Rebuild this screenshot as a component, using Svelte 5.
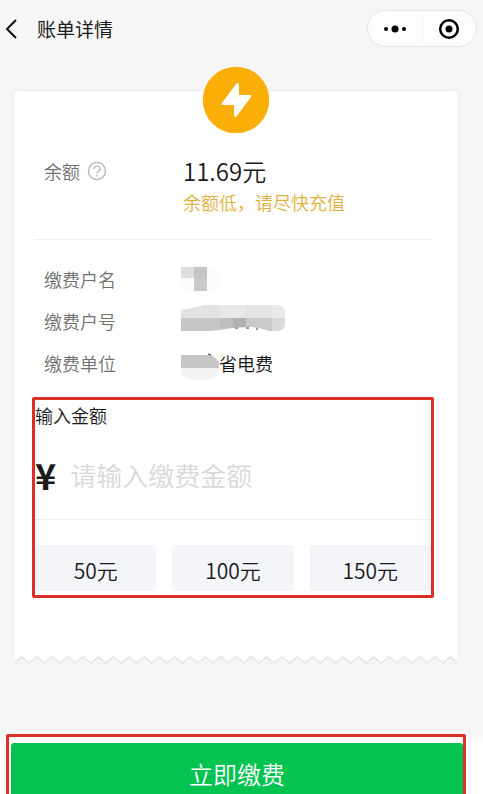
<script>
    let amount = $state('');

    const presets = [50, 100, 150];

    // zigzag lower edge of the bill
    const teeth = 29;
    const pitch = 10;
    let edge = 'M0 0V8';
    for (let i = 0; i < teeth; i++) {
        edge += `L${i * pitch + pitch / 2} 2L${(i + 1) * pitch} 8`;
    }
    const edgeLine = edge.replace('M0 0V8', 'M0 8');
    const edgeFill = edge + 'V0Z';

    // hidden parts of the account data
    const nameBlocks = [
        { x: 0, y: 0, w: 13, h: 11, c: '#dedede' },
        { x: 13, y: 0, w: 13, h: 11, c: '#c6c6c6' },
        { x: 13, y: 11, w: 13, h: 13, c: '#cacaca' },
        { x: 0, y: 11, w: 13, h: 13, c: '#fbfbfb' },
        { x: 26, y: 0, w: 12, h: 24, c: '#fcfcfc' }
    ];
    const numberBlocks = [
        { x: 0, y: 0, w: 39, h: 13, c: '#e2e2e2' },
        { x: 39, y: 0, w: 26, h: 13, c: '#e8e8e8' },
        { x: 65, y: 0, w: 26, h: 13, c: '#e4e4e4' },
        { x: 91, y: 0, w: 13, h: 13, c: '#e9e9e9' },
        { x: 0, y: 13, w: 39, h: 13, c: '#c6c6c6' },
        { x: 39, y: 13, w: 13, h: 13, c: '#bebebe' },
        { x: 52, y: 13, w: 13, h: 13, c: '#b2b2b2' },
        { x: 65, y: 13, w: 26, h: 13, c: '#c9c9c9' },
        { x: 91, y: 13, w: 13, h: 13, c: '#dadada' }
    ];
</script>

<div class="page">
    <header>
        <button class="back" aria-label="返回">
            <svg width="12" height="20" viewBox="0 0 12 20"><path d="M11 1L2 10l9 9" /></svg>
        </button>
        <h1>账单详情</h1>
        <div class="capsule">
            <button aria-label="更多">
                <svg width="24" height="10" viewBox="0 0 24 10">
                    <circle cx="3" cy="5" r="2" />
                    <circle cx="12" cy="5" r="3.5" />
                    <circle cx="21" cy="5" r="2" />
                </svg>
            </button>
            <button aria-label="关闭">
                <svg width="22" height="22" viewBox="0 0 22 22">
                    <circle class="ring" cx="11" cy="11" r="8.8" />
                    <circle cx="11" cy="11" r="3.5" />
                </svg>
            </button>
        </div>
    </header>

    <main>
        <div class="bill">
            <svg class="badge" width="68" height="68" viewBox="0 0 68 68">
                <circle cx="34" cy="34" r="33.3" fill="#fbae05" />
                <path d="M34 18L20 37Q19 39 21 39H32V50Q33 52 35 50L49 31Q50 29 48 29H37V18Q36 16 34 18z" fill="#fff" />
            </svg>

            <dl class="balance">
                <dt>
                    余额
                    <svg width="20" height="20" viewBox="0 0 20 20">
                        <circle cx="10" cy="10" r="8.5" />
                        <path d="M7 8a3 3 0 1 1 4.5 2.6Q10 11.4 10 12.5M10 14v1.5" />
                    </svg>
                </dt>
                <dd>
                    <strong>11.69元</strong>
                    <span>余额低，请尽快充值</span>
                </dd>
            </dl>

            <dl class="account">
                <dt>缴费户名</dt>
                <dd>
                    <svg width="38" height="24" viewBox="0 0 38 24">
                        {#each nameBlocks as b}
                            <rect x={b.x} y={b.y} width={b.w} height={b.h} fill={b.c} />
                        {/each}
                    </svg>
                </dd>
                <dt>缴费户号</dt>
                <dd>
                    <svg width="104" height="32" viewBox="0 0 104 32">
                        <clipPath id="number-mask">
                            <path d="M0 5Q14 3 22 0H96Q104 0 104 8V18Q104 26 96 26H88Q80 23 70 22Q56 22 44 24Q34 26 20 26H0z" />
                        </clipPath>
                        <path d="M54 23h3M65 23h3M75 24h2" stroke="#333" />
                        <g clip-path="url(#number-mask)">
                            {#each numberBlocks as b}
                                <rect x={b.x} y={b.y} width={b.w} height={b.h} fill={b.c} />
                            {/each}
                        </g>
                    </svg>
                </dd>
                <dt>缴费单位</dt>
                <dd>
                    <svg class="unit" width="38" height="28" viewBox="0 0 38 28">
                        <path d="M0 2H30Q36 5 38 10V15H0z" fill="#c6c6c6" />
                        <path d="M0 15H38Q38 27 24 27H14Q4 27 0 20z" fill="#f3f3f3" />
                        <path d="M27 1l3 1" stroke="#333" />
                    </svg>省电费
                </dd>
            </dl>

            <form class="pay marked" id="pay" onsubmit={(e) => e.preventDefault()}>
                <label for="amount">输入金额</label>
                <div class="field">
                    <span class="yen">¥</span>
                    <input id="amount" inputmode="decimal" placeholder="请输入缴费金额" bind:value={amount} />
                </div>
                <div class="presets">
                    {#each presets as p}
                        <button type="button" onclick={() => (amount = String(p))}>{p}元</button>
                    {/each}
                </div>
            </form>
        </div>
        <svg class="edge" viewBox="0 0 290 10" preserveAspectRatio="none">
            <path d={edgeFill} fill="#fff" />
            <path d={edgeLine} class="line" />
        </svg>
    </main>

    <footer>
        <div class="submit marked">
            <button type="submit" form="pay">立即缴费</button>
        </div>
    </footer>
</div>

<style>
    :global(body) {
        margin: 0;
        background: #f6f6f6;
    }

    .page {
        height: 100vh;
        overflow: hidden;
        display: flex;
        flex-direction: column;
        background: #f6f6f6;
        color: #1a1a1a;
        font-family: "Noto Sans CJK SC", sans-serif;
        font-size: 18px;
        font-weight: 350;
        line-height: 26px;
    }

    button {
        border: 0;
        padding: 0;
        background: none;
        color: inherit;
        font: inherit;
        cursor: pointer;
    }

    header {
        display: flex;
        align-items: center;
        padding: 10px 6px 0 5px;
    }

    .back {
        display: flex;
        width: 32px;
    }

    .back svg {
        fill: none;
        stroke: #111;
        stroke-width: 2;
    }

    h1 {
        flex: 1;
        margin: 0;
        font-size: 19px;
        font-weight: 400;
    }

    .capsule {
        display: flex;
        align-items: center;
        box-sizing: border-box;
        width: 110px;
        height: 37px;
        border: 1px solid #e6e6e6;
        border-radius: 19px;
        background: #fdfdfd;
    }

    .capsule button {
        flex: 1;
        display: flex;
        align-items: center;
        justify-content: center;
        height: 24px;
    }

    .capsule button + button {
        border-left: 1px solid #efefef;
    }

    .ring {
        fill: none;
        stroke: #000;
        stroke-width: 2.5;
    }

    main {
        padding: 44px 25px 0 14px;
    }

    .bill {
        position: relative;
        padding: 62px 26px 57px 20px;
        border-radius: 4px 4px 0 0;
        background: #fff;
        box-shadow: 0 0 3px rgba(0, 0, 0, 0.1);
    }

    /* sits across the top edge of the bill */
    .badge {
        position: absolute;
        top: -25px;
        left: 50%;
        transform: translateX(-50%);
    }

    dl {
        display: grid;
        grid-template-columns: 139px 1fr;
        margin: 0;
        padding-left: 10px;
    }

    dt {
        color: #707070;
    }

    dd {
        margin: 0;
        display: flex;
        align-items: center;
    }

    .balance {
        padding-bottom: 24px;
        border-bottom: 1px solid #eee;
    }

    .balance dt {
        display: flex;
        align-items: center;
        gap: 7px;
        height: 36px;
    }

    .balance dt svg {
        fill: none;
        stroke: #bbb;
        stroke-width: 1.5;
    }

    .balance dd {
        flex-direction: column;
        align-items: flex-start;
    }

    .balance strong {
        font-size: 24px;
        font-weight: inherit;
        line-height: 36px;
    }

    .balance span {
        color: #dfb03c;
    }

    .account {
        grid-auto-rows: 42px;
        align-items: center;
        padding-top: 18px;
        padding-bottom: 13px;
    }

    .account dd {
        margin-left: -2px;
        color: #111;
    }

    .unit {
        margin-top: 8px;
    }

    .marked {
        border: 3px solid #dc2f27;
        border-radius: 2px;
    }

    .pay {
        margin-right: -2px;
        margin-left: -2px;
        padding-bottom: 4px;
    }

    .pay label {
        display: block;
        padding-top: 2px;
    }

    .field {
        display: flex;
        align-items: center;
        gap: 14px;
        height: 91px;
        border-bottom: 1px solid #eee;
    }

    .yen {
        font-size: 36px;
        font-weight: 700;
    }

    input {
        flex: 1;
        min-width: 0;
        border: 0;
        padding: 3px 0 0;
        outline: 0;
        background: none;
        color: inherit;
        font: inherit;
        font-size: 26px;
        line-height: 38px;
    }

    input::placeholder {
        color: #d8d8d8;
        opacity: 1;
    }

    .presets {
        display: grid;
        grid-template-columns: repeat(3, 1fr);
        gap: 16px;
        padding-top: 25px;
    }

    .presets button {
        height: 46px;
        padding-top: 3px;
        border-radius: 3px;
        background: #f3f5f9;
        font-size: 21px;
    }

    .edge {
        display: block;
        position: relative;
        width: 100%;
        height: 10px;
        background: #f6f6f6;
    }

    .line {
        fill: none;
        stroke: #e9e9e9;
        stroke-width: 1.5;
    }

    footer {
        margin-top: auto;
        padding: 0 17px 0 6px;
        background: linear-gradient(#f6f6f6, #fff 12px);
    }

    .submit {
        margin-bottom: -6px;
        padding: 6px 0 0 2px;
        background: #fff;
    }

    .submit button {
        display: block;
        width: 100%;
        height: 54px;
        padding-top: 8px;
        border-radius: 3px;
        background: #04c351;
        color: #fff;
        font-size: 24px;
    }
</style>
